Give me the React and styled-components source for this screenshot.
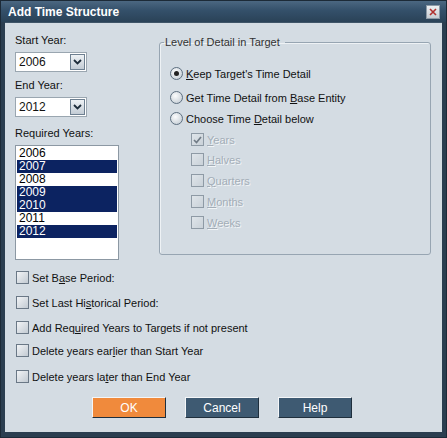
import React from "react";
import styled, { createGlobalStyle, css } from "styled-components";

const Global = createGlobalStyle`
  html, body { margin: 0; padding: 0; background: #2b3e50; }
  body { font-family: "Liberation Sans", Arial, sans-serif; font-size: 11px; }
`;

const Window = styled.div`
  width: 447px;
  height: 438px;
  box-sizing: border-box;
  background: #2b3e50;
  border: 1px solid #1c2a37;
  display: flex;
  flex-direction: column;
`;

const TitleBar = styled.div`
  height: 21px;
  flex: none;
  display: flex;
  align-items: center;
  justify-content: space-between;
  padding: 0 6px 0 7px;
  background: linear-gradient(#4b6781, #34506a 45%, #2a4257);
`;

const Title = styled.span`
  color: #fff;
  font-family: "Liberation Sans", Arial, sans-serif;
  font-weight: bold;
  font-size: 12px;
`;

const CloseBtn = styled.div`
  width: 12px;
  height: 12px;
  background: linear-gradient(#eef0f2, #c6cdd3);
  border: 1px solid #8c9aa7;
  display: flex;
  align-items: center;
  justify-content: center;
`;

const Body = styled.div`
  flex: 1;
  margin: 0 4px 5px 4px;
  background: #d4dce3;
  border-top: 1px solid #3f5568;
  display: flex;
  flex-direction: column;
  padding: 11px 0 0 10px;
  color: #111;
`;

const Top = styled.div`
  display: flex;
  align-items: flex-start;
`;

const LeftCol = styled.div`
  width: 104px;
  display: flex;
  flex-direction: column;
`;

const Label = styled.div`
  line-height: 13px;
  height: 13px;
  margin-top: ${(p) => p.$mt || 0}px;
`;

const SelectBox = styled.div`
  margin-top: 5px;
  width: 72px;
  height: 20px;
  box-sizing: border-box;
  border: 1px solid #9aa6b0;
  background: #fff;
  display: flex;
  align-items: center;
  justify-content: space-between;
  padding: 0 1px 0 3px;
  font-size: 12px;
`;

const DropBtn = styled.div`
  width: 15px;
  height: 16px;
  box-sizing: border-box;
  border: 1px solid #6e8091;
  background: linear-gradient(#eef2f5, #c3ccd5);
  display: flex;
  align-items: center;
  justify-content: center;
`;

const ListBox = styled.div`
  margin-top: 5px;
  width: 104px;
  height: 115px;
  box-sizing: border-box;
  border: 1px solid #8c98a3;
  background: #fff;
  padding: 1px 1px;
`;

const ListItem = styled.div`
  height: 13px;
  line-height: 13px;
  padding-left: 2px;
  font-size: 12px;
  ${(p) =>
    p.$sel
      ? css`
          background: #0c2361;
          color: #fff;
        `
      : css`
          color: #000;
        `}
`;

const Group = styled.fieldset`
  margin: 2px 0 0 40px;
  width: 272px;
  height: 219px;
  box-sizing: border-box;
  border: 1px solid #97a5b2;
  border-radius: 3px;
  padding: 0 0 0 10px;
  min-width: 0;
  box-shadow: inset 1px 1px 0 #eef2f5;
`;

const Legend = styled.legend`
  padding: 0 5px 0 1px;
  margin-left: -6px;
  color: #333;
  line-height: 13px;
`;

const Options = styled.div`
  display: flex;
  flex-direction: column;
  padding-top: 17px;
`;

const OptRow = styled.div`
  display: flex;
  align-items: center;
  height: 15px;
  margin-top: ${(p) => p.$mt || 0}px;
  margin-left: ${(p) => p.$ml || 0}px;
  gap: 3px;
  color: ${(p) => (p.$disabled ? "#a3adb7" : "#111")};
  text-shadow: ${(p) => (p.$disabled ? "1px 1px 0 #f2f5f7" : "none")};
`;

const Radio = styled.span`
  width: 13px;
  height: 13px;
  box-sizing: border-box;
  border-radius: 50%;
  border: 1px solid #5d6f80;
  background: radial-gradient(circle at 40% 35%, #fbfcfd, #c9d1d8 80%);
  display: flex;
  align-items: center;
  justify-content: center;
  flex: none;
  &::after {
    content: "";
    width: 5px;
    height: 5px;
    border-radius: 50%;
    background: ${(p) => (p.$on ? "#222" : "transparent")};
  }
`;

const Check = styled.span`
  width: 13px;
  height: 13px;
  box-sizing: border-box;
  border: 1px solid ${(p) => (p.$disabled ? "#8e9aa5" : "#6a7886")};
  background: ${(p) =>
    p.$disabled
      ? "linear-gradient(135deg, #dfe5ea, #c9d1d8)"
      : "linear-gradient(135deg, #f2f4f6, #c2cad2)"};
  display: flex;
  align-items: center;
  justify-content: center;
  flex: none;
`;

const U = styled.span`
  text-decoration: underline;
  text-underline-offset: 1px;
`;

const Checks = styled.div`
  display: flex;
  flex-direction: column;
  margin-top: 10px;
  padding-left: 1px;
`;

const Buttons = styled.div`
  display: flex;
  gap: 19px;
  margin: 13px 0 0 77px;
`;

const Button = styled.button`
  width: 74px;
  height: 21px;
  border: none;
  border-top: 1px solid #f4f6f8;
  border-left: 1px solid #f4f6f8;
  border-right: 1px solid #1f2f3d;
  border-bottom: 1px solid #1f2f3d;
  background: ${(p) => (p.$primary ? "#f08a3c" : "#3e5a72")};
  color: #fff;
  font-family: "Liberation Sans", Arial, sans-serif;
  font-size: 12px;
  padding: 0;
`;

const Chevron = () => (
  <svg width="9" height="6" viewBox="0 0 9 6">
    <path d="M1 1 L4.5 4.5 L8 1" fill="none" stroke="#1d2c3a" strokeWidth="1.8" />
  </svg>
);

const Tick = ({ color = "#707b86" }) => (
  <svg width="9" height="8" viewBox="0 0 9 8">
    <path d="M1 4 L3.5 6.5 L8 1" fill="none" stroke={color} strokeWidth="1.7" />
  </svg>
);

const Select = ({ value }) => (
  <SelectBox>
    <span>{value}</span>
    <DropBtn>
      <Chevron />
    </DropBtn>
  </SelectBox>
);

const years = [
  ["2006", false],
  ["2007", true],
  ["2008", false],
  ["2009", true],
  ["2010", true],
  ["2011", false],
  ["2012", true],
];

export default function App() {
  return (
    <>
      <Global />
      <Window>
        <TitleBar>
          <Title>Add Time Structure</Title>
          <CloseBtn>
            <svg width="8" height="8" viewBox="0 0 8 8">
              <path d="M1 1 L7 7 M7 1 L1 7" stroke="#b0302e" strokeWidth="1.6" />
            </svg>
          </CloseBtn>
        </TitleBar>
        <Body>
          <Top>
            <LeftCol>
              <Label>Start Year:</Label>
              <Select value="2006" />
              <Label $mt={7}>End Year:</Label>
              <Select value="2012" />
              <Label $mt={10}>Required Years:</Label>
              <ListBox>
                {years.map(([y, s]) => (
                  <ListItem key={y} $sel={s}>
                    {y}
                  </ListItem>
                ))}
              </ListBox>
            </LeftCol>
            <Group>
              <Legend>Level of Detail in Target</Legend>
              <Options>
                <OptRow>
                  <Radio $on />
                  <span>
                    <U>K</U>eep Target's Time Detail
                  </span>
                </OptRow>
                <OptRow $mt={9}>
                  <Radio />
                  <span>
                    Get Time Detail from <U>B</U>ase Entity
                  </span>
                </OptRow>
                <OptRow $mt={6}>
                  <Radio />
                  <span>
                    Choose Time <U>D</U>etail below
                  </span>
                </OptRow>
                <OptRow $mt={6} $ml={21} $disabled>
                  <Check $disabled>
                    <Tick />
                  </Check>
                  <span>
                    <U>Y</U>ears
                  </span>
                </OptRow>
                <OptRow $mt={5} $ml={21} $disabled>
                  <Check $disabled />
                  <span>
                    <U>H</U>alves
                  </span>
                </OptRow>
                <OptRow $mt={6} $ml={21} $disabled>
                  <Check $disabled />
                  <span>
                    <U>Q</U>uarters
                  </span>
                </OptRow>
                <OptRow $mt={6} $ml={21} $disabled>
                  <Check $disabled />
                  <span>
                    <U>M</U>onths
                  </span>
                </OptRow>
                <OptRow $mt={6} $ml={21} $disabled>
                  <Check $disabled />
                  <span>
                    <U>W</U>eeks
                  </span>
                </OptRow>
              </Options>
            </Group>
          </Top>
          <Checks>
            <OptRow>
              <Check />
              <span>
                Set B<U>a</U>se Period:
              </span>
            </OptRow>
            <OptRow $mt={10}>
              <Check />
              <span>
                Set Last Hi<U>s</U>torical Period:
              </span>
            </OptRow>
            <OptRow $mt={10}>
              <Check />
              <span>
                Add Req<U>u</U>ired Years to Targets if not present
              </span>
            </OptRow>
            <OptRow $mt={8}>
              <Check />
              <span>
                Delete years ear<U>l</U>ier than Start Year
              </span>
            </OptRow>
            <OptRow $mt={11}>
              <Check />
              <span>
                Delete years la<U>t</U>er than End Year
              </span>
            </OptRow>
          </Checks>
          <Buttons>
            <Button $primary>OK</Button>
            <Button>Cancel</Button>
            <Button>Help</Button>
          </Buttons>
        </Body>
      </Window>
    </>
  );
}
